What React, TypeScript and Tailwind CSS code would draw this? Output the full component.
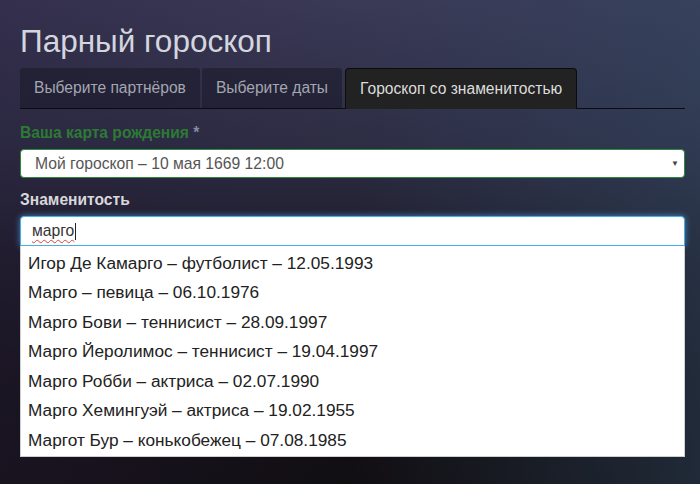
const celebs = [
  "Игор Де Камарго – футболист – 12.05.1993",
  "Марго – певица – 06.10.1976",
  "Марго Бови – теннисист – 28.09.1997",
  "Марго Йеролимос – теннисист – 19.04.1997",
  "Марго Робби – актриса – 02.07.1990",
  "Марго Хемингуэй – актриса – 19.02.1955",
  "Маргот Бур – конькобежец – 07.08.1985",
];

const tabs = ["Выберите партнёров", "Выберите даты", "Гороскоп со знаменитостью"];

export default function App() {
  return (
    <div className="relative w-[700px] h-[484px] overflow-hidden font-['Liberation_Sans',Arial,sans-serif] bg-[linear-gradient(to_bottom,#3a3956_0%,#2d2d44_30%,#1c1a26_55%,#131016_80%,#110e12_100%)]">
      {/* blue tint on the right */}
      <div className="absolute inset-0 bg-[linear-gradient(to_right,rgba(40,30,60,0.35)_0%,rgba(40,60,90,0)_50%,rgba(50,75,100,0.45)_100%)]" />

      <div className="relative px-5 pt-[23px]">
        <h1 className="text-[31.5px] leading-[37px] text-[#d4d6df] font-normal">Парный гороскоп</h1>

        {/* Tabs */}
        <div className="mt-[8px] flex items-end gap-[2px] border-b border-[#0c0c10] w-[665px]">
          {tabs.map((t, i) =>
            i === 2 ? (
              <div
                key={t}
                className="ml-[1px] h-[41px] px-[14px] flex items-center rounded-t-[4px] bg-[#222222] border border-b-0 border-[#0c0c0c] text-[15.6px] text-[#dcdcdc] -mb-px"
              >
                {t}
              </div>
            ) : (
              <div
                key={t}
                className="h-[40px] px-[14px] flex items-center rounded-t-[3px] bg-[rgba(20,20,34,0.45)] text-[15.6px] text-[#a4a6b0]"
              >
                {t}
              </div>
            )
          )}
        </div>

        {/* Birth chart */}
        <div className="mt-[14px] text-[15.6px] font-bold text-[#2c7a34] leading-[20px]">
          Ваша карта рождения <span className="text-[#8589a6]">*</span>
        </div>
        <div className="mt-[6px] h-[29px] w-[665px] rounded-[4px] bg-white border border-[#2c8a3a] flex items-center justify-between pl-[14px] pr-[5px]">
          <span className="text-[15.7px] text-[#555555]">Мой гороскоп – 10 мая 1669 12:00</span>
          <span className="text-[8px] text-[#444]">▼</span>
        </div>

        {/* Celebrity */}
        <div className="mt-[12px] text-[15.6px] font-bold text-[#d8d8dc] leading-[20px]">Знаменитость</div>
        <div className="mt-[6px] w-[665px] h-[30px] rounded-t-[4px] bg-white border border-[#45b0e8] shadow-[0_0_6px_rgba(80,170,240,0.7)] flex items-center pl-[11px]">
          <span className="text-[15.7px] text-[#333] underline decoration-wavy decoration-[#e04040] decoration-1 underline-offset-[3px]">
            марго
          </span>
          <span className="w-px h-[17px] bg-[#222] ml-px" />
        </div>
        <div className="w-[665px] bg-white border border-[#cfcfcf] border-t-0 pt-[3px]">
          {celebs.map((c) => (
            <div key={c} className="h-[29.5px] flex items-center pl-[7px] text-[17.25px] text-[#222]">
              {c}
            </div>
          ))}
        </div>
      </div>
    </div>
  );
}
